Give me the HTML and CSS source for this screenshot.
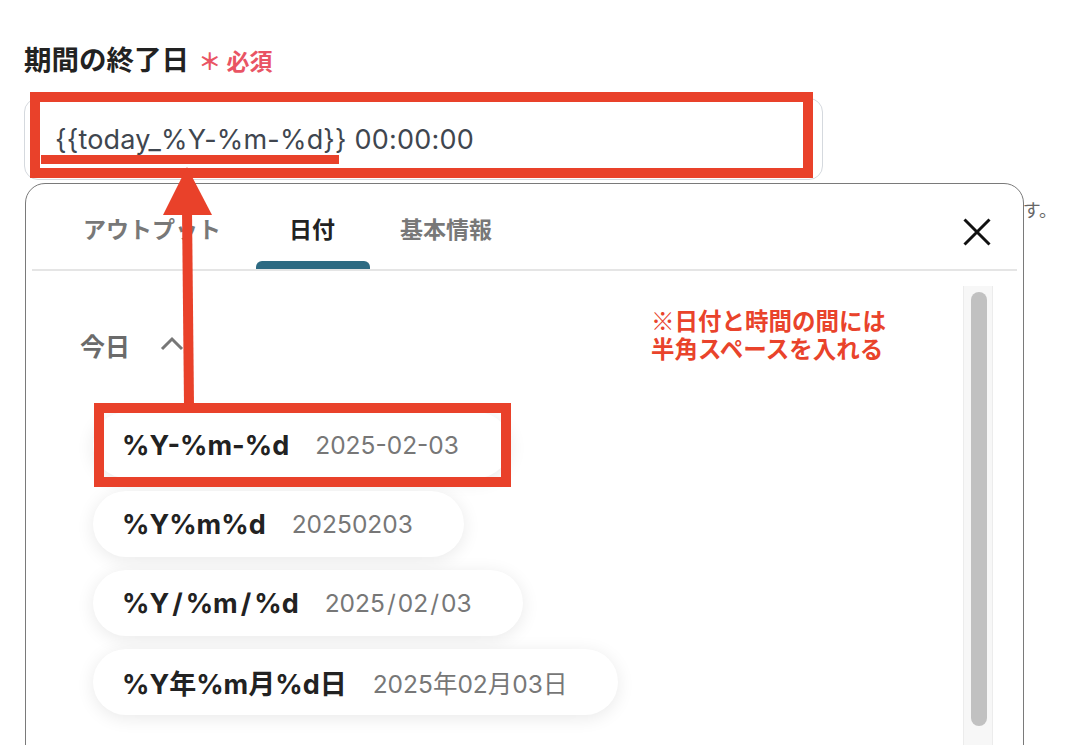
FILE: index.html
```html
<!DOCTYPE html>
<html lang="ja">
<head>
<meta charset="utf-8">
<link rel="stylesheet" href="styles.css">
</head>
<body>
<div class="page">
  <div class="field">
    <div class="label">期間の終了日 <span class="req">＊ 必須</span></div>
    <div class="input">{{today_%Y-%m-%d}} 00:00:00</div>
    <p class="help">日付と時刻の形式で入力します。</p>
  </div>

  <div class="popup">
    <div class="popup-head">
      <div class="tabs">
        <div class="tab">アウトプット</div>
        <div class="tab active">日付</div>
        <div class="tab">基本情報</div>
      </div>
      <div class="close">
        <svg width="28" height="28" viewBox="0 0 28 28"><path d="M1.5 1.5 L26.5 26.5 M26.5 1.5 L1.5 26.5" stroke="#111" stroke-width="3" fill="none"/></svg>
      </div>
    </div>
    <div class="popup-body">
      <div class="content">
        <div class="section-head">
          <span class="section-title">今日</span>
          <svg class="chev" width="24" height="15" viewBox="0 0 24 15"><path d="M2 13 L12 3 L22 13" stroke="#777" stroke-width="3" fill="none"/></svg>
        </div>
        <div class="items">
          <div class="item"><span class="key">%Y-%m-%d</span><span class="val">2025-02-03</span></div>
          <div class="item"><span class="key">%Y%m%d</span><span class="val">20250203</span></div>
          <div class="item"><span class="key">%Y<span class="sl">/</span>%m<span class="sl">/</span>%d</span><span class="val">2025<span class="sl2">/</span>02<span class="sl2">/</span>03</span></div>
          <div class="item"><span class="key">%Y年%m月%d日</span><span class="val">2025年02月03日</span></div>
        </div>
      </div>
      <div class="scrollbar"><div class="thumb"></div></div>
    </div>
  </div>

  <div class="mark mark-input"></div>
  <div class="mark-underline"></div>
  <div class="mark mark-item"></div>
  <svg class="arrow" width="56" height="245" viewBox="0 0 56 245">
    <polygon points="27,2 52,50 3,50" fill="#e9412a"/>
    <polygon points="22,45 32,45 34,240 24,240" fill="#e9412a"/>
  </svg>
  <div class="note">
    <div class="note-line">※日付と時間の間には</div>
    <div class="note-line">半角スペースを入れる</div>
  </div>
</div>
</body>
</html>
```
FILE: styles.css
```css
* { box-sizing: border-box; }
html, body { margin: 0; padding: 0; }
body {
  width: 1065px;
  height: 745px;
  overflow: hidden;
  background: #fff;
  font-family: "Inter", "Noto Sans CJK JP", sans-serif;
}
.page {
  position: relative;
  width: 1065px;
  height: 745px;
  overflow: hidden;
  padding: 38px 8px 0 24px;
}
.label {
  font-family: "Noto Sans CJK JP", sans-serif;
  font-size: 27.5px;
  font-weight: 700;
  color: #222;
  line-height: 40px;
  height: 40px;
}
.req {
  color: #e95464;
  font-size: 23px;
  margin-left: 3px;
}
.input {
  margin-top: 20px;
  width: 799px;
  height: 82px;
  border: 1.5px solid #d5d9de;
  border-radius: 14px;
  padding-left: 30px;
  display: flex;
  align-items: center;
  font-size: 27px;
  color: #40464f;
  letter-spacing: 0.2px;
}
.help {
  margin: 19px 0 0;
  text-align: right;
  font-family: "Noto Sans CJK JP", sans-serif;
  font-size: 18px;
  line-height: 20px;
  color: #666;
}
.popup {
  position: absolute;
  left: 25px;
  top: 183px;
  width: 999px;
  height: 600px;
  background: #fff;
  border: 1.5px solid #7a7a7a;
  border-radius: 20px;
}
.popup-head {
  display: flex;
  align-items: flex-end;
  height: 87px;
  margin: 0 6px;
  border-bottom: 2px solid #e5e5e5;
}
.tabs {
  display: flex;
  margin-left: 17px;
}
.tab {
  position: relative;
  height: 68px;
  padding: 0 34px;
  line-height: 54px;
  font-family: "Noto Sans CJK JP", sans-serif;
  font-size: 23px;
  font-weight: 700;
  color: #787878;
}
.tab:last-child { padding-left: 31px; }
.tab.active { color: #222; }
.tab.active::after {
  content: "";
  position: absolute;
  left: 1px;
  right: -1px;
  bottom: 0;
  height: 8px;
  background: #2d6a82;
  border-radius: 6px 6px 0 0;
}
.close {
  margin-left: auto;
  margin-right: 26px;
  align-self: flex-start;
  margin-top: 34px;
  width: 28px;
  height: 28px;
}
.close svg { display: block; }
.popup-body {
  display: flex;
}
.content {
  flex: 1;
  padding: 54px 0 0 54px;
}
.section-head {
  display: flex;
  align-items: center;
  height: 40px;
}
.section-title {
  font-family: "Noto Sans CJK JP", sans-serif;
  font-size: 25px;
  font-weight: 700;
  color: #6b6b6b;
}
.chev { margin-left: 30px; margin-top: -4px; }
.items {
  margin-top: 47px;
  margin-left: 13px;
  display: flex;
  flex-direction: column;
  align-items: flex-start;
  gap: 13px;
}
.item {
  height: 66px;
  border-radius: 33px;
  background: #fff;
  padding: 0 51px 0 29px;
  display: flex;
  align-items: center;
  gap: 26px;
  box-shadow: 0 3px 18px rgba(0,0,0,0.09);
}
.key {
  font-size: 27px;
  font-weight: 700;
  color: #222;
}
.val {
  font-size: 24.5px;
  color: #777;
}
.sl { padding: 0 3px; }
.sl2 { padding: 0 2px; }
.scrollbar {
  width: 30px;
  height: 470px;
  margin: 15px 30px 0 0;
  background: #f7f7f7;
  border-left: 1px solid #ececec;
  border-right: 1px solid #ececec;
  padding: 6px 0 0 7px;
}
.thumb {
  width: 16px;
  height: 434px;
  border-radius: 8px;
  background: #c1c1c1;
}
.mark {
  position: absolute;
  border: 10px solid #e9412a;
}
.mark-input { left: 30px; top: 92px; width: 783px; height: 86px; }
.mark-item { left: 94px; top: 403px; width: 417px; height: 84px; }
.mark-underline {
  position: absolute;
  left: 41px;
  top: 155px;
  width: 298px;
  height: 9px;
  background: #e9412a;
}
.arrow {
  position: absolute;
  left: 160px;
  top: 165px;
}
.note {
  position: absolute;
  left: 651px;
  top: 306px;
  font-family: "Noto Sans CJK JP", sans-serif;
  font-size: 23.5px;
  font-weight: 700;
  color: #e9432b;
}
.note-line {
  height: 28px;
  line-height: 28px;
}
```
